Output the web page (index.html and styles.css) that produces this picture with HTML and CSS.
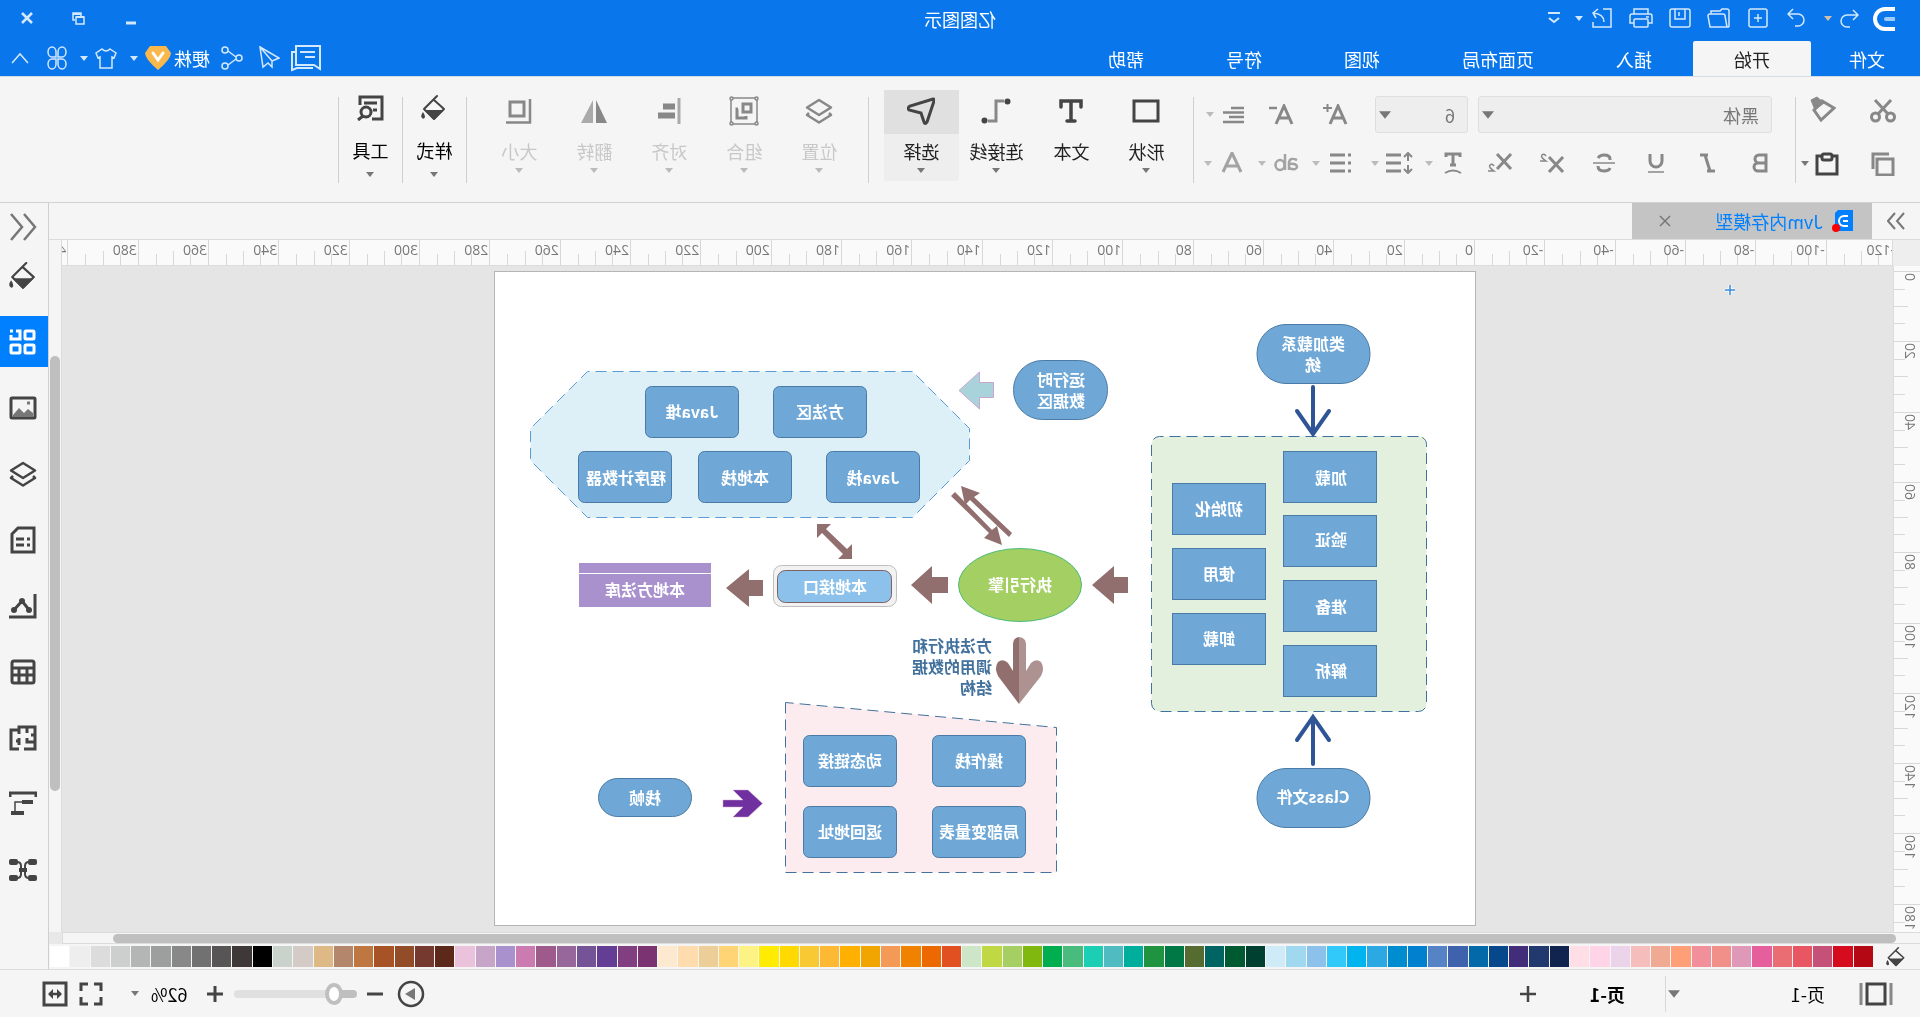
FILE: index.html
```html
<!DOCTYPE html>
<html lang="zh-CN">
<head>
<meta charset="utf-8">
<title>亿图图示</title>
<link rel="stylesheet" href="styles.css">
</head>
<body>
<svg class="defs" aria-hidden="true">
  <symbol id="tri" viewBox="0 0 8 5"><path d="M0 0H8L4 5Z" fill="currentColor"/></symbol>
  <symbol id="bucket" viewBox="0 0 26 26"><path d="M10 1L23 14L13 24L3 14L13 5" fill="none" stroke="currentColor" stroke-width="2" stroke-linejoin="round" stroke-linecap="round"/><path d="M3 15H23L13 25Z" fill="currentColor"/><path d="M24 17q3 4 1 6t-3-1q0-2 2-5Z" fill="currentColor"/></symbol>
  <symbol id="layers" viewBox="0 0 28 26"><g fill="none" stroke="currentColor" stroke-width="2.5" stroke-linejoin="round"><path d="M14 2L26 9.500L14 17L2 9.500Z"/><path d="M4 15L2 17L14 24.500L26 17L24 15"/></g></symbol>
</svg>
<div class="app">
  <header class="titlebar">
    <div class="quick">
      <span class="logo"><svg width="22" height="24" viewBox="0 0 22 24" fill="none"><path d="M0 2H10A10 10 0 0 1 10 22H0" stroke="#fff" stroke-width="4"/><path d="M1 12H9" stroke="#9fcdfb" stroke-width="4" stroke-linecap="round"/></svg></span>
      <button class="q-undo" aria-label="撤销"><svg width="20" height="20" viewBox="0 0 20 20"><path d="M6 2L1 7L6 12M1 7H12A6 6 0 0 1 12 19H9"/></svg></button>
      <button class="q-drop tan" aria-label="撤销列表"><svg width="8" height="5"><use href="#tri"/></svg></button>
      <button class="q-redo" aria-label="重做"><svg width="20" height="20" viewBox="0 0 20 20"><path d="M14 1L19 6L14 11M19 6H9A6 6 0 0 0 9 18H12"/></svg></button>
      <button aria-label="新建"><svg width="20" height="20" viewBox="0 0 20 20"><rect x="1" y="1" width="18" height="18" rx="2"/><path d="M10 6V14M6 10H14"/></svg></button>
      <button aria-label="打开"><svg width="24" height="20" viewBox="0 0 24 20"><path d="M2 19V3Q2 1 4 1H9L11 3H20V6M2 19H21L23 8Q23 6 21 6H8Q6 6 6 8L4 19"/></svg></button>
      <button aria-label="保存"><svg width="22" height="20" viewBox="0 0 22 20"><rect x="1" y="1" width="20" height="18" rx="2"/><path d="M6 1V11H16V1M12 4V8"/></svg></button>
      <button aria-label="打印"><svg width="24" height="20" viewBox="0 0 24 20"><path d="M5 6V1H19V6M5 15H1V8Q1 6 3 6H21Q23 6 23 8V15H19"/><rect x="5" y="11" width="14" height="8" rx="1"/><path d="M4 9H7"/></svg></button>
      <button class="q-export" aria-label="导出"><svg width="22" height="20" viewBox="0 0 22 20"><path d="M10 1H2V19H20V14M9 14Q9 6 20 5M15 1L20 5L17 10"/></svg></button>
      <button class="q-drop" aria-label="导出列表"><svg width="8" height="5"><use href="#tri"/></svg></button>
      <button aria-label="更多"><svg width="12" height="12" viewBox="0 0 12 12"><path d="M0 1H12M1 6L6 10L11 6" stroke-width="2"/></svg></button>
    </div>
    <h1>亿图图示</h1>
    <div class="window">
      <button aria-label="最小化"><svg width="10" height="14" viewBox="0 0 10 14"><path d="M0 12H10" stroke-width="3"/></svg></button>
      <button aria-label="还原"><svg width="13" height="13" viewBox="0 0 13 13"><path d="M1 5H9V12H1ZM4 4V1H12V8H10" stroke-width="1.500"/><path d="M1 5H9M4 2H12" stroke-width="2"/></svg></button>
      <button aria-label="关闭"><svg width="12" height="12" viewBox="0 0 12 12"><path d="M1 1L11 11M11 1L1 11" stroke-width="2.500"/></svg></button>
    </div>
  </header>
  <nav class="menubar">
    <div class="tabs">
      <a href="#" class="file">文件</a><a href="#" class="current">开始</a><a href="#">插入</a><a href="#">页面布局</a><a href="#">视图</a><a href="#">符号</a><a href="#">帮助</a>
    </div>
    <div class="account">
      <button aria-label="消息"><svg width="31" height="28" viewBox="0 0 31 28"><path d="M2 2H26V21H8L2 25ZM7 8H22M7 13H17M27 8H30V26L25 24H9" stroke-width="2"/></svg></button>
      <button aria-label="发送"><svg width="22" height="24" viewBox="0 0 22 24"><path d="M20 1L1 12L8 15V21L12 17L17 21L20 1L8 15"/></svg></button>
      <button aria-label="分享"><svg width="22" height="24" viewBox="0 0 22 24"><circle cx="4" cy="12" r="3"/><circle cx="18" cy="4" r="3"/><circle cx="18" cy="20" r="3"/><path d="M7 11L15 5M7 13L15 19"/></svg></button>
      <button class="user"><span>梗株</span><svg width="28" height="28" viewBox="0 0 28 28"><path d="M6 2H22L27 9Q27 15 14 26Q1 15 1 9Z" fill="#f9b84c" stroke="none"/><path d="M9 9L14 16L19 9" stroke="#fff" stroke-width="3" stroke-linecap="round"/></svg><svg width="8" height="5"><use href="#tri"/></svg></button>
      <button class="skin" aria-label="皮肤"><svg width="22" height="22" viewBox="0 0 22 22"><path d="M7 2L1 6L3 11L5 10V21H17V10L19 11L21 6L15 2Q11 6 7 2Z"/></svg><svg width="8" height="5"><use href="#tri"/></svg></button>
      <button aria-label="应用"><svg width="20" height="24" viewBox="0 0 20 24"><path d="M9 11H5A4 5 0 1 1 9 6ZM11 11H15A4 5 0 1 0 11 6ZM9 13H5A4 5 0 1 0 9 18ZM11 13H15A4 5 0 1 1 11 18Z"/></svg></button>
      <button aria-label="收起功能区"><svg width="18" height="12" viewBox="0 0 18 12"><path d="M1 11L9 2L17 11"/></svg></button>
    </div>
  </nav>

  <section class="ribbon" aria-label="开始">
    <div class="clipboard">
      <button aria-label="剪切"><svg width="26" height="24" viewBox="0 0 26 24"><circle cx="5.500" cy="18" r="4"/><circle cx="20.500" cy="18" r="4"/><path d="M8 15L21 1M18 15L5 1"/></svg></button>
      <button class="brush" aria-label="格式刷"><svg width="26" height="26" viewBox="0 0 26 26"><path d="M2 12L14 5L22 14L15 24Z"/><path d="M12 7L19 1L25 4L21 14Z" fill="currentColor" stroke-width="1"/></svg></button>
      <button aria-label="复制"><svg width="24" height="24" viewBox="0 0 24 24"><path d="M2 7H18V23H2ZM6 2H22V17" stroke-width="3"/></svg></button>
      <button class="dark" aria-label="粘贴"><svg width="24" height="24" viewBox="0 0 24 24"><path d="M2 4H22V22H2Z" stroke-width="3"/><rect x="7" y="2" width="10" height="6" rx="2" fill="#f5f5f5" stroke-width="3"/></svg><svg width="8" height="5"><use href="#tri"/></svg></button>
    </div>
    <span class="sep"></span>
    <div class="font">
      <div class="row">
        <span class="combo family"><select aria-label="字体"><option>黑体</option></select><svg width="12" height="8"><use href="#tri" width="12" height="8"/></svg></span>
        <span class="combo size"><select aria-label="字号"><option>6</option></select><svg width="12" height="8"><use href="#tri" width="12" height="8"/></svg></span>
        <button class="grow" aria-label="增大字号"><svg width="26" height="22" viewBox="0 0 26 22"><path d="M2 20L10 2L18 20M5 14H15" stroke-width="3"/><path d="M16 4H25M20.500 0V8" stroke-width="2"/></svg></button>
        <button class="grow" aria-label="减小字号"><svg width="26" height="22" viewBox="0 0 26 22"><path d="M2 20L10 2L18 20M5 14H15" stroke-width="3"/><path d="M17 4H25" stroke-width="2.500"/></svg></button>
        <button class="drop align" aria-label="对齐文本"><svg width="28" height="18" viewBox="0 0 28 18"><path d="M4 2H17M4 6.500H25M4 11H19M4 16H25" stroke-width="2.500"/></svg><svg width="8" height="5"><use href="#tri"/></svg></button>
      </div>
      <div class="row second">
        <button aria-label="加粗"><svg width="18" height="20" viewBox="0 0 18 20"><path d="M3 2H10A4 4 0 0 1 10 10H3ZM3 10H11A4 4 0 0 1 11 18H3Z" stroke-width="3"/></svg></button>
        <button aria-label="倾斜"><svg width="18" height="20" viewBox="0 0 18 20"><path d="M9 2H17M2 18H10M12 2L7 18" stroke-width="3"/></svg></button>
        <button aria-label="下划线"><svg width="18" height="20" viewBox="0 0 18 20"><path d="M3 1V8A6 6 0 0 0 15 8V1" stroke-width="3"/><path d="M1 19H17" stroke-width="1.500"/></svg></button>
        <button aria-label="删除线"><svg width="22" height="20" viewBox="0 0 22 20"><path d="M17 5Q15 2 11 2Q5 2 5 6V7M17 13Q17 18 11 18Q6 18 5 15" stroke-width="3"/><path d="M0 10H22" stroke-width="1.500"/></svg></button>
        <button aria-label="上标"><svg width="26" height="20" viewBox="0 0 26 20"><path d="M2 4L16 19M16 4L2 19" stroke-width="3"/><path d="M19 3Q21 0 23 2Q25 4 19 8H25" stroke-width="1.500"/></svg></button>
        <button aria-label="下标"><svg width="26" height="20" viewBox="0 0 26 20"><path d="M2 1L16 16M16 1L2 16" stroke-width="3"/><path d="M19 13Q21 10 23 12Q25 14 19 18H25" stroke-width="1.500"/></svg></button>
        <button class="drop" aria-label="文字方向"><svg width="28" height="22" viewBox="0 0 28 22"><path d="M7 5V2H21V5M14 2V14M11 13H17" stroke-width="3"/><path d="M6 21Q14 16 22 21" stroke-width="2"/></svg><svg width="8" height="5"><use href="#tri"/></svg></button>
        <button class="drop" aria-label="行距"><svg width="28" height="22" viewBox="0 0 28 22"><path d="M5 1V9M1 5L5 1L9 5M5 13V21M1 17L5 21L9 17" stroke-width="2"/><path d="M12 3H27M12 11H27M12 19H27" stroke-width="3"/></svg><svg width="8" height="5"><use href="#tri"/></svg></button>
        <button class="drop list" aria-label="项目符号"><svg width="28" height="22" viewBox="0 0 28 22"><path d="M3 3H6M3 11H6M3 19H6M9 3H24M9 11H24M9 19H24" stroke-width="3"/></svg><svg width="8" height="5"><use href="#tri"/></svg></button>
        <button class="drop light" aria-label="字符间距"><svg width="28" height="22" viewBox="0 0 28 22"><g stroke-width="2.500"><path d="M3 8Q10 5 11 10V18M11 12Q3 11 3 15Q4 19 11 16"/><ellipse cx="20" cy="13" rx="4.500" ry="5"/><path d="M15 2V18"/></g></svg><svg width="8" height="5"><use href="#tri"/></svg></button>
        <button class="drop light" aria-label="字体颜色"><svg width="28" height="22" viewBox="0 0 28 22"><path d="M5 20L14 1L23 20M8 14H20" stroke-width="3"/></svg><svg width="8" height="5"><use href="#tri"/></svg></button>
      </div>
    </div>
    <span class="sep"></span>
    <div class="tools">
      <button class="tool"><span class="ico"><svg width="28" height="24" viewBox="0 0 28 24"><rect x="2" y="2" width="24" height="20" stroke-width="3"/></svg></span><span>形状</span><svg width="8" height="5"><use href="#tri"/></svg></button>
      <button class="tool"><span class="ico"><svg width="24" height="24" viewBox="0 0 24 24"><path d="M2 8V2H22V8M12 2V22M8 22H16" stroke-width="3.500" stroke-linecap="round"/></svg></span><span>文本</span></button>
      <button class="tool"><span class="ico"><svg width="30" height="26" viewBox="0 0 30 26"><path d="M7 3H15V23H23" stroke="#888" stroke-width="3"/><circle cx="3.500" cy="3.500" r="3" fill="currentColor" stroke="none"/><circle cx="26.500" cy="22.500" r="3" fill="currentColor" stroke="none"/></svg></span><span>连接线</span><svg width="8" height="5"><use href="#tri"/></svg></button>
      <button class="tool chosen"><span class="ico"><svg width="28" height="28" viewBox="0 0 28 28"><path d="M2 2Q0 2 1 4L8 25Q10 28 11 25L14 16L26 13Q28 11 25 9Z" stroke-width="3"/></svg></span><span>选择</span><svg width="8" height="5"><use href="#tri"/></svg></button>
    </div>
    <span class="sep"></span>
    <div class="arrange">
      <button class="tool off"><span class="ico"><svg width="28" height="26"><use href="#layers"/></svg></span><span>位置</span><svg width="8" height="5"><use href="#tri"/></svg></button>
      <button class="tool off"><span class="ico"><svg width="30" height="30" viewBox="0 0 30 30"><path d="M2 2H28V28H2Z" stroke-width="1.500"/><g fill="#f5f5f5" stroke-width="1.500"><circle cx="2.500" cy="2.500" r="1.500"/><circle cx="27.500" cy="2.500" r="1.500"/><circle cx="2.500" cy="27.500" r="1.500"/><circle cx="27.500" cy="27.500" r="1.500"/></g><path d="M8 8H16V16H8ZM21 13H22V22H13V20" stroke-width="3"/></svg></span><span>组合</span><svg width="8" height="5"><use href="#tri"/></svg></button>
      <button class="tool off"><span class="ico"><svg width="24" height="28" viewBox="0 0 24 28"><path d="M2 1V27" stroke="#aaa" stroke-width="3"/><path d="M6 9.500H18M6 18.500H23" stroke-width="6"/></svg></span><span>对齐</span><svg width="8" height="5"><use href="#tri"/></svg></button>
      <button class="tool off"><span class="ico"><svg width="28" height="24" viewBox="0 0 28 24"><path d="M12 1V24H1Z" fill="currentColor" stroke="none"/><path d="M15 1V24H27Z" fill="#aaa" stroke="none"/></svg></span><span>翻转</span><svg width="8" height="5"><use href="#tri"/></svg></button>
      <button class="tool off"><span class="ico"><svg width="26" height="26" viewBox="0 0 26 26"><path d="M8 4H22V18H8Z" stroke-width="3"/><path d="M2 1V24.500H26" stroke-width="2.500"/></svg></span><span>大小</span><svg width="8" height="5"><use href="#tri"/></svg></button>
    </div>
    <span class="sep"></span>
    <button class="tool narrow"><span class="ico"><svg width="26" height="28"><use href="#bucket"/></svg></span><span>样式</span><svg width="8" height="5"><use href="#tri"/></svg></button>
    <span class="sep"></span>
    <button class="tool narrow"><span class="ico"><svg width="28" height="26" viewBox="0 0 28 26"><path d="M12 24H2V2H24V10M7 8H20M7 15H11" stroke-width="3"/><circle cx="18" cy="17" r="5" stroke-width="3"/><path d="M21 21L26 25" stroke-width="3"/></svg></span><span>工具</span><svg width="8" height="5"><use href="#tri"/></svg></button>
    <span class="sep"></span>
  </section>

  <main class="main">
    <section class="workspace">
      <div class="docs">
        <button class="expand" aria-label="展开"><svg width="18" height="18" viewBox="0 0 18 18"><path d="M1 1L8 9L1 17M10 1L17 9L10 17" stroke-width="2"/></svg></button>
        <div class="doc">
          <svg width="24" height="24" viewBox="0 0 24 24"><path d="M2 1H17L20 4V22H2Z" fill="#0080ff"/><path d="M7 7H11A5 5 0 0 1 11 17H7M7 12H12" fill="none" stroke="#fff" stroke-width="2"/><circle cx="19" cy="19" r="4" fill="#f00"/></svg>
          <a href="#">Jvm内存模型</a>
          <button aria-label="关闭文档"><svg width="12" height="12" viewBox="0 0 12 12"><path d="M1 1L11 11M11 1L1 11" stroke-width="1.500"/></svg></button>
        </div>
      </div>
      <div class="stage">
        <div class="corner"></div>
        <div class="hruler"><ol id="hruler"></ol></div>
        <div class="vtrack"><span></span></div>
        <div class="vruler"><ol id="vruler"></ol></div>
        <div class="canvas">
          <svg class="origin" width="10" height="10" viewBox="0 0 10 10"><path d="M5 0V10M0 5H10" stroke="#fff" stroke-width="3"/><path d="M5 0V10M0 5H10" stroke="#3b8ad8" stroke-width="1.500"/></svg>
          <svg class="page" width="982" height="655" viewBox="444 271 982 655">
            <rect class="paper" x="444.500" y="271.500" width="981" height="654"/>
            <rect class="zone green" x="493.500" y="436.500" width="275" height="275" rx="8"/>
            <path class="zone blue" d="M1007.500 371.500H1332.500L1389.500 428.500V460.500L1332.500 517.500H1007.500L950.500 460.500V428.500Z"/>
            <path class="zone pink" d="M1134.500 702.500V872.500H863.500V727.500Z"/>
            <g class="node">
              <rect x="550" y="324.500" width="113" height="59" rx="29"/>
              <rect x="550" y="768.500" width="113" height="59" rx="29"/>
              <rect x="812.500" y="360.500" width="94" height="59" rx="29"/>
              <rect x="1228.500" y="778.500" width="93" height="38" rx="19"/>
              <rect x="543.500" y="451.500" width="93" height="51"/><rect x="543.500" y="515.500" width="93" height="51"/><rect x="543.500" y="580.500" width="93" height="51"/><rect x="543.500" y="645.500" width="93" height="51"/>
              <rect x="654.500" y="483.500" width="93" height="51"/><rect x="654.500" y="548.500" width="93" height="51"/><rect x="654.500" y="613.500" width="93" height="51"/>
              <rect x="1053.500" y="386.500" width="93" height="51" rx="6"/><rect x="1181.500" y="386.500" width="93" height="51" rx="6"/>
              <rect x="1000.500" y="451.500" width="93" height="51" rx="6"/><rect x="1128.500" y="451.500" width="93" height="51" rx="6"/><rect x="1248.500" y="451.500" width="93" height="51" rx="6"/>
              <rect x="894.500" y="735.500" width="93" height="51" rx="6"/><rect x="1023.500" y="735.500" width="93" height="51" rx="6"/>
              <rect x="894.500" y="806.500" width="93" height="51" rx="6"/><rect x="1023.500" y="806.500" width="93" height="51" rx="6"/>
            </g>
            <g fill="none" stroke="#2f5597" stroke-width="4" stroke-linecap="round"><path d="M607 387V432M591 411L607 434L623 411"/><path d="M607 764V720M591 740L607 717L623 740"/></g>
            <path d="M961 390.500L940.500 409V397.500H926.500V382.500H940.500V372Z" fill="#a9d3da" stroke="#cda3cf"/>
            <ellipse cx="900" cy="585" rx="61.500" ry="36.500" fill="#a4cf63" stroke="#4fbb78"/>
            <g fill="#916f6f">
              <path d="M828 585L806 566V577H792V593H806V604Z"/>
              <path d="M1009 585L988 566V577H972V593H988V604Z"/>
              <path d="M1194 588L1171 569V580H1157V596H1171V607Z"/>
              <path d="M959 486L955 505L950 500L911 537L908 533L946 497L940 493Z"/>
              <path d="M918 545L936 538L931 533L969 496L965 492L928 530L923 526Z"/>
              <path d="M1103 524V538L1098 533L1077 554L1082 559H1068V544L1073 549L1094 529L1089 524Z"/>
              <path d="M901 637Q907 638 907 644V671L912 663Q917 658 922 662Q926 668 922 676L901 704Z"/>
            </g>
            <path d="M901 637Q894 638 894 644V671L889 663Q884 658 879 662Q875 668 879 676L901 704Z" fill="#ae9191"/>
            <rect x="1023.500" y="565.500" width="123" height="41" rx="8" fill="#f2f2f2" stroke="#bfbfbf"/>
            <rect x="1028.500" y="570.500" width="114" height="32" rx="8" fill="#8bc1ea" stroke="#7c6264"/>
            <path d="M1209 563H1341V607H1209Z" fill="#a991ce"/><path d="M1209 573.500H1341" stroke="#fff"/>
            <path d="M1157.500 803.500L1172 790H1187L1177 800H1197V807H1177L1187 817H1172Z" fill="#7030a0" stroke="#cda3cf" stroke-width=".500"/>
            <g class="caption">
              <text x="607" y="350">类加载系</text><text x="607" y="371">统</text><text x="607" y="803">Class文件</text>
              <text x="589" y="484">加载</text><text x="589" y="546">验证</text><text x="589" y="613">准备</text><text x="589" y="677">解析</text>
              <text x="701" y="515">初始化</text><text x="701" y="580">使用</text><text x="701" y="645">卸载</text>
              <text x="859" y="386">运行时</text><text x="859" y="407">数据区</text>
              <text x="1100" y="418">方法区</text><text x="1228" y="418">Java堆</text>
              <text x="1047" y="484">Java栈</text><text x="1175" y="484">本地栈</text><text x="1294" y="484">程序计数器</text>
              <text x="900" y="591">执行引擎</text><text x="1085" y="593">本地接口</text><text x="1275" y="596">本地方法库</text>
              <text x="941" y="767">操作栈</text><text x="1070" y="767">动态链接</text><text x="941" y="838">局部变量表</text><text x="1070" y="838">返回地址</text>
              <text x="1275" y="804">栈帧</text>
            </g>
            <g class="note"><text x="928" y="652">方法执行和</text><text x="928" y="673">调用的数据</text><text x="928" y="694">结构</text></g>
          </svg>
        </div>
        <div class="htrack"><span></span></div>
        <div class="corner end"></div>
      </div>
      <div class="palette"><button aria-label="填充颜色"><svg width="20" height="20"><use href="#bucket"/></svg></button><ul id="swatches"></ul></div>
    </section>
    <aside class="dock">
      <button class="fold" aria-label="收起面板"><svg width="28" height="28" viewBox="0 0 28 28"><path d="M13 1L2 14L13 27M26 1L15 14L26 27" stroke-width="2.500"/></svg></button>
      <button aria-label="填充"><svg width="28" height="28"><use href="#bucket"/></svg></button>
      <button class="active" aria-label="符号库"><svg width="28" height="28" viewBox="0 0 28 28"><rect x="3" y="3" width="9" height="8" rx="1"/><rect x="3" y="17" width="9" height="8" rx="1"/><rect x="17" y="17" width="9" height="8" rx="1"/><path d="M21 3H17V11H26V7M24 3H27"/></svg></button>
      <button aria-label="图片"><svg width="28" height="24" viewBox="0 0 28 24"><rect x="2" y="2" width="24" height="20" rx="1"/><path d="M4 21V17L9 13L13 17L18 12L24 19V21Z" fill="#777" stroke="none"/><path d="M7 7H10" stroke="#777"/></svg></button>
      <button aria-label="图层"><svg width="28" height="26"><use href="#layers"/></svg></button>
      <button aria-label="文档"><svg width="26" height="28" viewBox="0 0 26 28"><path d="M2 2H18L24 8V26H2ZM6 13H9M12 13H20M6 19H9M12 19H20"/></svg></button>
      <button aria-label="图表"><svg width="28" height="26" viewBox="0 0 28 26"><path d="M2 1V24H28M7 18L15 8L24 18"/><g fill="currentColor" stroke="none"><circle cx="8" cy="17" r="3"/><circle cx="15" cy="8" r="3"/><circle cx="23" cy="17" r="3"/></g></svg></button>
      <button aria-label="表格"><svg width="26" height="26" viewBox="0 0 26 26"><rect x="2" y="2" width="22" height="22" rx="2"/><path d="M2 9H24M2 16H24M9 9V24M17 9V24"/></svg></button>
      <button aria-label="平面图"><svg width="28" height="26" viewBox="0 0 28 26"><path d="M18 5V2H2V24H13M18 24H26V5H18V9M10 2V8M2 10H6M2 17H10V13M18 13V20M18 16H21"/></svg></button>
      <button aria-label="甘特图"><svg width="28" height="26" viewBox="0 0 28 26"><path d="M1 6V2H27V6" stroke-width="3"/><path d="M4 11H15M13 22H26" stroke-width="4"/><path d="M15 11H22V20" stroke-width="1.500"/></svg></button>
      <button aria-label="思维导图"><svg width="28" height="24" viewBox="0 0 28 24"><g fill="currentColor" stroke="none"><rect x="0" y="1" width="9" height="6" rx="2"/><rect x="0" y="17" width="9" height="6" rx="2"/><rect x="19" y="1" width="9" height="6" rx="2"/><rect x="19" y="17" width="9" height="6" rx="2"/><rect x="10" y="10" width="8" height="4"/></g><path d="M8 4Q12 4 12 8V16Q12 20 8 20M20 4Q16 4 16 8V16Q16 20 20 20" stroke-width="2"/></svg></button>
    </aside>
  </main>

  <footer class="status">
    <div class="pages">
      <button class="pageview" aria-label="页面视图"><svg width="34" height="24" viewBox="0 0 34 24"><path d="M2 1V23M32 1V23" stroke="#888" stroke-width="3"/><path d="M8 2H26V22H8Z" stroke-width="3"/></svg></button>
      <button class="pagelist"><span>页-1</span><svg width="12" height="8"><use href="#tri" width="12" height="8"/></svg></button>
      <a href="#" class="pagetab">页-1</a>
      <button aria-label="添加页"><svg width="16" height="16" viewBox="0 0 16 16"><path d="M8 0V16M0 8H16"/></svg></button>
    </div>
    <div class="zoom">
      <button class="play" aria-label="演示"><svg width="28" height="28" viewBox="0 0 28 28"><circle cx="14" cy="14" r="12"/><path d="M10 8L20 14L10 20Z" fill="#777" stroke="none"/></svg></button>
      <button aria-label="缩小"><svg width="16" height="16" viewBox="0 0 16 16"><path d="M0 8H16" stroke-width="3"/></svg></button>
      <input type="range" min="0" max="100" value="13" aria-label="缩放">
      <button aria-label="放大"><svg width="16" height="16" viewBox="0 0 16 16"><path d="M8 0V16M0 8H16" stroke-width="3"/></svg></button>
      <button class="percent"><span>62%</span><svg width="8" height="5"><use href="#tri"/></svg></button>
      <button aria-label="全屏"><svg width="24" height="24" viewBox="0 0 24 24"><path d="M2 9V2H9M15 2H22V9M22 15V22H15M9 22H2V15" stroke-width="3"/></svg></button>
      <button aria-label="适应宽度"><svg width="26" height="26" viewBox="0 0 26 26"><rect x="2" y="2" width="22" height="22" stroke-width="3"/><path d="M7 13H19" stroke-width="2.500"/><path d="M11 8L6 13L11 18ZM15 8L20 13L15 18Z" fill="currentColor" stroke="none"/></svg></button>
    </div>
  </footer>
</div>
<script src="app.js"></script>
</body>
</html>
```

FILE: styles.css
```css
* { box-sizing: border-box; }
body {
  margin: 0;
  overflow: hidden;
  font: 18px/24px "Noto Sans CJK SC", sans-serif;
  color: #222;
  background: #f5f5f5;
}
button {
  display: flex;
  align-items: center;
  justify-content: center;
  margin: 0;
  padding: 0;
  border: 0;
  background: none;
  font: inherit;
  color: inherit;
}
a { color: inherit; text-decoration: none; }
ol, ul { margin: 0; padding: 0; list-style: none; }
svg { display: block; flex: none; }
button svg { fill: none; stroke: currentColor; }
button svg use { stroke: none; }
.defs { position: absolute; width: 0; height: 0; }

/* The window is laid out from right to left as a mirror image. */
.app {
  display: flex;
  flex-direction: column;
  height: 100vh;
  transform: scaleX(-1);
}

/* title bar */
.titlebar {
  display: grid;
  grid-template-columns: 1fr auto 1fr;
  align-items: center;
  height: 36px;
  color: #fff;
  background: #0977eb;
}
.titlebar h1 { margin: 0; padding-top: 2px; font-size: 18px; font-weight: 400; }
.quick { display: flex; align-items: center; padding-left: 25px; color: #d4e8fd; }
.quick button { width: 39px; height: 36px; }
.quick svg { stroke-width: 1.500; }
.quick .logo { width: 36px; padding-top: 2px; }
.quick .q-undo { width: 20px; }
.quick .q-drop { width: 22px; }
.quick .q-redo { width: 39px; }
.quick .q-export + .q-drop { width: 8px; }
.quick .q-export + .q-drop + button { width: 42px; }
.quick .tan { color: #d3bfa8; }
.window { display: flex; justify-content: flex-end; padding-right: 1px; color: #d4e8fd; }
.window button { width: 52px; height: 34px; }

/* menu */
.menubar {
  display: flex;
  justify-content: space-between;
  height: 40px;
  color: #fff;
  background: #0977eb;
}
.tabs { display: flex; align-items: flex-end; }
.tabs a { height: 35px; padding: 6px 41px 0; }
.tabs .file { padding: 6px 38px 0 35px; }
.tabs .current { color: #222; background: #f5f5f5; border-radius: 2px 2px 0 0; }
.account { display: flex; align-items: center; padding: 4px 2px 0 0; color: #d4e8fd; }
.account button { width: 37px; }
.account svg { stroke-width: 1.500; }
.account .user { justify-content: flex-end; width: 88px; gap: 2px; padding-right: 4px; color: #fff; }
.account .user use { color: #d4e8fd; }
.account .user svg:last-child { margin-left: 4px; }
.account .skin { justify-content: flex-end; width: 50px; gap: 7px; padding-right: 4px; }

/* ribbon */
.ribbon {
  display: flex;
  height: 127px;
  border-top: 1px solid #d5dce4;
  border-bottom: 1px solid #d2d2d2;
}
.sep { width: 1px; height: 86px; margin-top: 20px; background: #cfcfcf; }
.clipboard {
  display: grid;
  grid-template-columns: 60px 54px;
  grid-template-rows: 53px 53px;
  width: 124px;
  padding: 7px 0 0 7px;
  color: #888;
  stroke-width: 3;
}
.clipboard .brush { padding: 0 0 4px 6px; }
.clipboard .dark { justify-content: flex-start; gap: 6px; padding-left: 14px; color: #444; }
.clipboard .dark use { color: #777; }
.font { width: 601px; padding: 19px 0 0 23px; color: #888; }
.row { display: flex; align-items: center; height: 37px; }
.row.second { height: 36px; margin: 12px 0 0 -14px; }
.row button { width: 52px; height: 36px; }
.row .drop { gap: 6px; justify-content: flex-end; padding-right: 5px; width: 54px; }
.row .drop use { color: #bbb; }
.row .list { width: 59px; }
.row .light { color: #a3a3a3; }
.row .grow { width: 54px; }
.row .align { width: 53px; }
.combo { display: flex; align-items: center; height: 37px; border: 1px solid #dddde2; border-radius: 3px; background: #eee; }
.combo select { flex: 1; width: 0; height: 35px; padding: 0 12px; border: 0; background: none; appearance: none; font: inherit; color: #777; }
.combo svg { margin-right: 3px; color: #777; }
.combo.family { width: 294px; margin-right: 10px; }
.combo.size { width: 93px; margin-right: 13px; }
.tools { display: flex; padding: 0 15px 0 9px; }
.arrange { display: flex; padding: 0 15px 0 11px; }
.tool {
  flex-direction: column;
  justify-content: flex-start;
  width: 75px;
  height: 91px;
  margin-top: 13px;
  color: #444;
}
.tool .ico { display: flex; align-items: center; justify-content: center; width: 100%; height: 44px; padding-bottom: 2px; }
.tool span:not(.ico) { margin: 5px 0; color: #222; }
.tool use { color: #777; }
.tool .ico use { color: inherit; }
.tool.chosen { background: #eee; border-radius: 2px; }
.tool.chosen .ico { background: #e0e0e0; }
.tool.off { color: #888; }
.tool.off span:not(.ico) { color: #c8c8c8; }
.tool.off > svg use { color: #bbb; }
.tool.narrow { width: 63px; height: 96px; }
.tool.narrow .ico { height: 38px; }
.tool.narrow span:not(.ico) { margin: 10px 0; color: #000; }

/* workspace */
.main { display: flex; flex: 1; min-height: 0; }
.workspace { display: flex; flex: 1; flex-direction: column; min-width: 0; }
.docs { display: flex; height: 37px; border-bottom: 1px solid #dcdcdc; }
.expand { width: 48px; color: #777; }
.doc { display: flex; align-items: center; width: 240px; padding-left: 17px; background: #c4c4c4; color: #0080ff; }
.doc a { margin: 0 auto 0 8px; }
.doc button { margin-right: 27px; color: #777; }
.stage {
  display: grid;
  flex: 1;
  grid-template-columns: 27px 1fr 13px;
  grid-template-rows: 26px 1fr 12px;
  min-height: 0;
}
.corner { background: #eee; }
.corner.end { background: #e8e8e8; }
.hruler, .vruler {
  overflow: hidden;
  min-width: 0;
  min-height: 0;
  background: #fafafa;
  font: 14px/20px "Open Sans", sans-serif;
  color: #777;
}
.hruler { border-bottom: 1px solid #dcdcdc; border-left: 1px solid #dcdcdc; }
.hruler ol { display: grid; grid-auto-flow: column; grid-auto-columns: 1fr; height: 25px; margin: 0 -64px 0 -5px; }
.hruler li {
  padding-left: 1px;
  border-left: 1px solid #d8d8d8;
  background:
    linear-gradient(#d8d8d8, #d8d8d8) 25% 100% / 1px 11px no-repeat,
    linear-gradient(#d8d8d8, #d8d8d8) 50% 100% / 1px 14px no-repeat,
    linear-gradient(#d8d8d8, #d8d8d8) 75% 100% / 1px 11px no-repeat;
}
.hruler span { display: block; }
.vruler { border-right: 1px solid #dcdcdc; }
.vruler ol { display: grid; grid-auto-rows: 1fr; height: calc(100% + 37px); margin-top: 5px; }
.vruler li {
  padding-top: 1px;
  border-top: 1px solid #d8d8d8;
  background:
    linear-gradient(#d8d8d8, #d8d8d8) 100% 25% / 11px 1px no-repeat,
    linear-gradient(#d8d8d8, #d8d8d8) 100% 50% / 14px 1px no-repeat,
    linear-gradient(#d8d8d8, #d8d8d8) 100% 75% / 11px 1px no-repeat;
}
.vruler span { display: block; writing-mode: vertical-rl; transform: rotate(180deg); }
.vtrack { grid-row: span 2; padding: 116px 2px 0 1px; border-left: 1px solid #dcdcdc; }
.vtrack span { display: block; width: 10px; height: 435px; border-radius: 5px; background: #bfbfbf; }
.canvas { position: relative; overflow: hidden; min-width: 0; min-height: 0; background: #e5e5e5; }
.origin { position: absolute; left: 158px; top: 19px; }
.page { position: absolute; left: 417px; top: 5px; }
.htrack { grid-column: span 2; padding: 1px 50px 1px 24px; border: solid #dcdcdc; border-width: 1px 1px 1px 0; }
.htrack span { display: block; height: 9px; border-radius: 5px; background: #bfbfbf; }

/* drawing */
.paper { fill: #fff; stroke: #b5b5b5; }
.zone { stroke: #41719c; stroke-dasharray: 11 6; }
.green { fill: #e2f0dd; }
.blue { fill: #ddf0f8; stroke: #5b9bd5; }
.pink { fill: #fdecef; }
.node { fill: #6fa8d6; stroke: #4a7ba6; }
.caption { fill: #fff; font-size: 16px; font-weight: 700; text-anchor: middle; }
.note { fill: #41719c; font-size: 16px; font-weight: 700; }

/* palette */
.palette { display: flex; height: 26px; padding-right: 1px; border-bottom: 1px solid #dcdcdc; }
.palette button { width: 47px; color: #444; }
.palette ul { display: flex; flex: 1; gap: 1px; padding: 2px 0; }
.palette li { flex: 1; }

/* dock */
.dock { display: flex; flex-direction: column; gap: 15px; width: 49px; border-left: 1px solid #cfcfcf; border-bottom: 1px solid #dcdcdc; color: #444; }
.dock button { height: 51px; padding-left: 2px; stroke-width: 3; }
.dock .fold { height: 47px; margin-bottom: -15px; color: #777; }
.dock .active { color: #fff; background: #0080ff; }

/* status bar */
.status { display: flex; justify-content: space-between; height: 47px; color: #000; }
.pages, .zoom { display: flex; align-items: center; color: #444; stroke-width: 2.500; }
.pages { padding-left: 27px; }
.pageview { width: 34px; }
.pagelist { justify-content: space-between; width: 194px; height: 36px; padding: 0 2px 0 34px; border-right: 1px solid #d8d8d8; }
.pagelist use, .percent use { color: #777; }
.pagelist span, .percent span { color: #000; }
.pagetab { width: 129px; padding-left: 40px; font-weight: 700; color: #000; }
.zoom { padding-right: 42px; }
.zoom .play { margin-right: 14px; }
.zoom input { width: 123px; height: 22px; margin: 0 11px 0 10px; background: none; appearance: none; }
.zoom input::-webkit-slider-runnable-track { height: 8px; border-radius: 4px; background: linear-gradient(90deg, #bfbfbf 20%, #e0e0e0 20%); }
.zoom input::-webkit-slider-thumb { width: 18px; height: 22px; margin-top: -7px; border: 4px solid #bfbfbf; border-radius: 50%; background: #fff; appearance: none; }
.percent { gap: 12px; margin: 0 28px 0 19px; }
.zoom button:last-child { margin-left: 11px; }
```

FILE: app.js
```js
const colors = (
  "b50815 d70b1e c55078 e85563 eb6d74 e55f9c e098b8 f09089 f1909b ff9f78 f0aa94 f5bdbb ebd4e9 ffd4e6 ffdfe5 " +
  "10244f 22396f 412d79 07488d 0369a8 3f62ad 5583c5 0080cf 008dcf 2ca8e2 00b4f0 30c9fa 8bc1ea a0d8ef cfebf7 " +
  "004031 005a31 006463 556b2f 007846 1f9340 00ae9d 50bbc0 1bceb4 48bb7d 00ae50 80b810 a5cf63 c0d844 cde6c7 " +
  "e15021 ec6800 f08200 f39a57 f0a500 ffb000 fdb933 f9c933 ffd900 ffec00 fdf284 fed474 ecce98 ffdcad fde8d0 " +
  "7b3371 813e80 643e94 755397 97669b 9e5a8a cb7bb0 a991ce c7a5c9 ebc2db 5b281a 763930 934c28 a85326 bf7741 " +
  "b4866b dfb985 d4cac6 cad3cb 000000 3e3838 575555 727171 888888 9d9e9e b4b5b5 cdcece dcdcdc eeeeee ffffff"
).split(" ");

for (const color of colors) {
  const item = document.createElement("li");
  item.style.background = "#" + color;
  document.getElementById("swatches").append(item);
}

function fillRuler(id, from, to) {
  for (let value = from; value <= to; value += 20) {
    const item = document.createElement("li");
    const label = document.createElement("span");
    label.textContent = value;
    item.append(label);
    document.getElementById(id).append(item);
  }
}

fillRuler("hruler", -120, 400);
fillRuler("vruler", 0, 180);
```
